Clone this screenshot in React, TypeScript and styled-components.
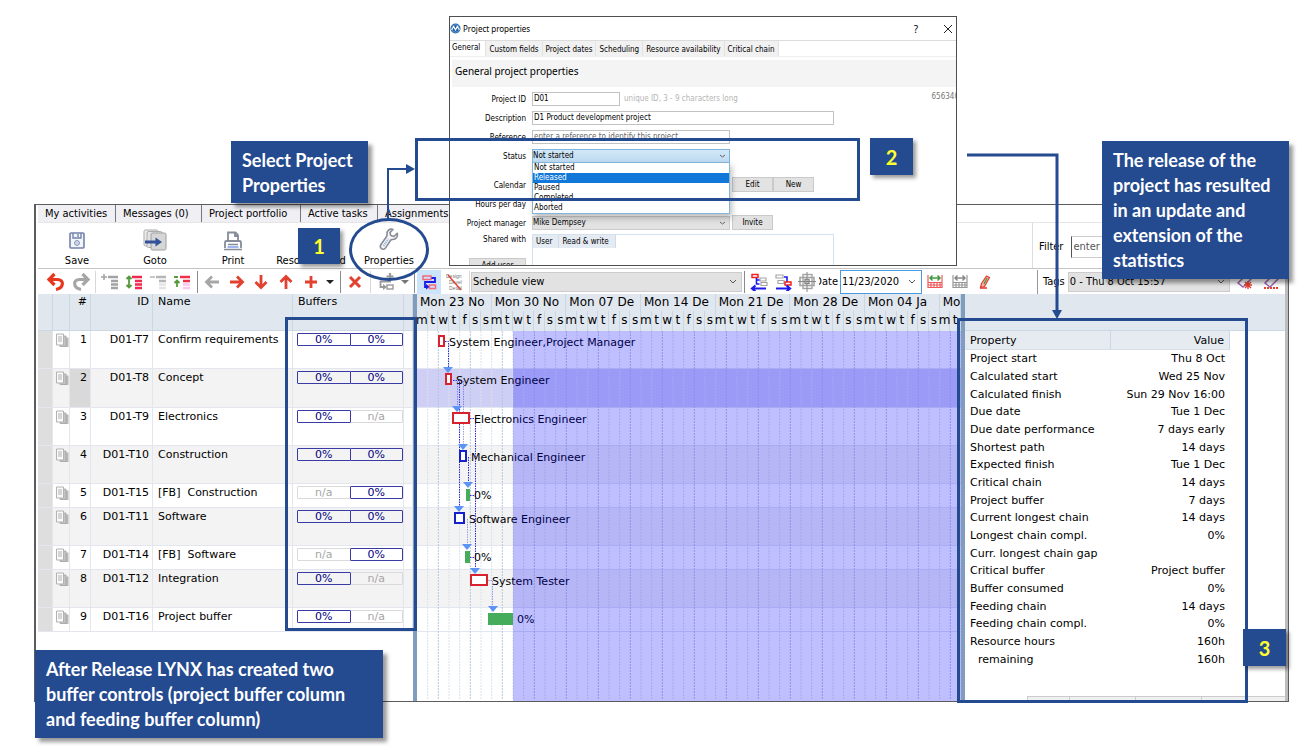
import React from "react";
import styled, { createGlobalStyle, css } from "styled-components";

const NAVY = "#244a90";
const HEAD = "#e0e7ef";
const WIDE = `"DejaVu Sans", Verdana, sans-serif`;
const UI = `"DejaVu Sans Condensed", "DejaVu Sans", Tahoma, sans-serif`;

const GlobalStyle = createGlobalStyle`
  * { box-sizing: border-box; }
  body { margin: 0; background: #fff; color: #000; font-family: ${UI}; font-size: 11px; }
  button, input, select { font: inherit; color: inherit; margin: 0; padding: 0; border-radius: 0; }
  table { border-collapse: separate; border-spacing: 0; }
  ul { list-style: none; margin: 0; padding: 0; }
`;

const Page = styled.main`
  position: relative;
  min-height: 100vh;
  padding: 204px 27px 16px 34px;
  overflow: hidden;
`;

/* ---------- application window ---------- */

const AppWindow = styled.section`
  display: flex;
  flex-direction: column;
  border: 1px solid #5c5c5c;
  border-left-width: 2px;
  box-shadow: inset -3px 0 0 #bdbdbd;
  padding: 0 3px 0 2px;
`;

const TabBar = styled.nav`
  display: flex;
  height: 18px;
  border-bottom: 1px solid #e6e6e6;
`;

const Tab = styled.button<{ $w: number }>`
  width: ${(p) => p.$w}px;
  border: 0;
  border-right: 1px solid #777;
  background: #efeff4;
  text-align: left;
  padding-left: 7px;
  white-space: nowrap;
`;

const MainTools = styled.div`
  display: flex;
  height: 46px;
  border-bottom: 1px solid #c4c4c4;
`;

const BigButton = styled.button`
  width: 78px;
  border: 0;
  background: none;
  display: flex;
  flex-direction: column;
  align-items: center;
  justify-content: flex-end;
  gap: 3px;
  padding-bottom: 1px;
  white-space: nowrap;
`;

const Spacer = styled.div`
  flex: 1;
`;

const FilterBox = styled.div`
  display: flex;
  align-items: center;
  gap: 8px;
  width: 253px;
  border-left: 1px solid #ddd;
  padding-left: 6px;
  padding-top: 2px;
`;

const FilterInput = styled.input`
  width: 160px;
  height: 22px;
  border: 1px solid #ccc;
  border-left-color: #555;
  padding-left: 1px;
  &::placeholder { color: #555; opacity: 1; }
`;

const Tools = styled.div`
  display: flex;
  align-items: center;
  height: 25px;
  padding-left: 6px;
`;

const ToolButton = styled.button<{ $w?: number; $on?: boolean }>`
  width: ${(p) => p.$w ?? 24}px;
  height: 24px;
  flex: none;
  border: 0;
  background: ${(p) => (p.$on ? "#cce4fb" : "none")};
  display: flex;
  align-items: center;
  justify-content: center;
`;

const Divider = styled.span<{ $w: number; $dark?: boolean }>`
  width: ${(p) => p.$w}px;
  height: 22px;
  flex: none;
  display: flex;
  justify-content: center;
  &::before {
    content: "";
    width: 1px;
    background: ${(p) => (p.$dark ? "#8a8a8a" : "#d8d8d8")};
  }
`;

const SelectWrap = styled.span<{ $w?: number }>`
  display: flex;
  align-items: center;
  width: ${(p) => (p.$w ? p.$w + "px" : "auto")};
  flex: none;
  select { flex: 1; min-width: 0; appearance: none; outline: 0; }
  svg { margin-left: -14px; margin-right: 4px; pointer-events: none; flex: none; }
`;

const SmallSelectWrap = styled(SelectWrap)`
  svg { margin-left: -12px; }
`;

const GreySelect = styled.select`
  height: 20px;
  border: 1px solid #ccc;
  background: #e2e2e2;
  padding-left: 1px;
`;

const DateLabel = styled.label`
  width: 21px;
  overflow: hidden;
  display: flex;
  justify-content: flex-end;
  padding-right: 2px;
`;

const DateWrap = styled(SelectWrap)`
  height: 24px;
  border: 1px solid #4a9be0;
  input { width: 100%; border: 0; outline: 0; padding-left: 1px; background: #fff; height: 22px; }
`;

const TagBox = styled.div`
  display: flex;
  align-items: center;
  width: 248px;
  border-left: 1px solid #999;
  padding-left: 5px;
  gap: 3px;
`;

/* ---------- workspace ---------- */

const Workspace = styled.div`
  display: flex;
  height: 407px;
  font-family: ${WIDE};
`;

const Splitter = styled.div`
  width: 4px;
  flex: none;
  background: #819dbd;
`;

const TaskPane = styled.div`
  width: 375px;
  flex: none;
`;

const TaskTable = styled.table`
  width: 100%;
  table-layout: fixed;
  th, td {
    padding: 1px 3px 0 5px;
    line-height: 15px;
    font-weight: 400;
    vertical-align: top;
    text-align: left;
    white-space: nowrap;
    border-right: 1px solid #e3e6ef;
    border-bottom: 1px solid #e3e6ef;
  }
  th { background: ${HEAD}; border-color: #cbd8e4; height: 37px; padding-top: 0; }
  th.right, td.right { text-align: right; }
  td.mark { background: #dedede; }
  td.doc { padding: 2px 0 0 2px; }
  td.buf { padding: 2px 0 0 4px; }
`;

const TaskRow = styled.tr<{ $h: number; $even: boolean; $sel: boolean }>`
  height: ${(p) => p.$h}px;
  background: ${(p) => (p.$even ? "#f3f3f3" : "#fff")};
  td.num { background: ${(p) => (p.$sel ? "#d9d9d9" : "transparent")}; }
`;

const BufferPair = styled.div`
  display: flex;
`;

const Buffer = styled.span<{ $on: boolean }>`
  width: 54px;
  height: 13px;
  line-height: 12px;
  text-align: center;
  border: 1px solid ${(p) => (p.$on ? "#3a3aa4" : "#dadada")};
  border-radius: 1px;
  color: ${(p) => (p.$on ? "#000080" : "#a6a6a6")};
  position: relative;
  z-index: ${(p) => (p.$on ? 1 : 0)};
  & + & { margin-left: -1px; }
`;

const GanttPane = styled.div`
  flex: 1;
  min-width: 0;
  display: flex;
  flex-direction: column;
`;

const Calendar = styled.div`
  display: grid;
  grid-template-columns: repeat(51, 1fr);
  grid-template-rows: 17px 20px;
  background: ${HEAD};
  font-size: 12px;
  overflow: hidden;
`;

const Week = styled.span<{ $span: number }>`
  grid-column: span ${(p) => p.$span};
  min-width: 0;
  overflow: hidden;
  white-space: nowrap;
  padding-left: 3px;
  line-height: 17px;
  border-right: 1px solid #c9d6e3;
`;

const Day = styled.span`
  min-width: 0;
  display: flex;
  justify-content: center;
  line-height: 18px;
  border-right: 1px solid #c9d6e3;
`;

const Chart = styled.svg`
  display: block;
  width: 100%;
  flex: 1;
  font-family: ${WIDE};
  font-size: 11px;
`;

const StatsPane = styled.aside`
  width: 320px;
  flex: none;
  display: flex;
  flex-direction: column;
`;

const StatsHead = styled.div`
  height: 37px;
  background: ${HEAD};
  border-bottom: 1px solid #cbd8e4;
`;

const StatsTable = styled.table`
  width: 265px;
  height: 337px;
  th, td { font-weight: 400; padding: 0 5px; text-align: left; line-height: 15px; }
  th { height: 19px; background: #e6ebf2; border-right: 1px solid #cbd8e4; border-bottom: 1px solid #d8e0ea; }
  th:last-child, td:last-child { text-align: right; width: 119px; }
  td.sub { padding-left: 13px; }
`;

const BottomStrip = styled.div`
  display: flex;
  height: 5px;
  margin: auto 0 0 62px;
  background: #f0f0f0;
  border-top: 1px solid #ccc;
  span { border-right: 1px solid #ccc; width: 66px; }
  span:first-child { width: 43px; border-left: 1px solid #ccc; }
`;

/* ---------- dialog ---------- */

const Dialog = styled.section`
  position: absolute;
  left: 449px;
  top: 16px;
  width: 508px;
  height: 250px;
  overflow: hidden;
  border: 1px solid #4f4f4f;
  background: #fff;
  font-size: 8px;
  line-height: 10px;
`;

const TitleBar = styled.header`
  display: flex;
  align-items: center;
  gap: 2px;
  height: 24px;
  border-bottom: 1px solid #dcdcdc;
  font-family: "Noto Sans", sans-serif;
`;

const TitleButton = styled.button`
  width: 33px;
  border: 0;
  background: none;
  display: flex;
  justify-content: flex-end;
  font-size: 10px;
  padding-right: 3px;
`;

const DialogTabs = styled.nav`
  display: flex;
  align-items: stretch;
  height: 16px;
  border-bottom: 1px solid #eee;
`;

const DialogTab = styled.button<{ $on?: boolean }>`
  border: 0;
  border-right: 1px solid #e2e2e2;
  background: ${(p) => (p.$on ? "#fff" : "#f1f1f1")};
  padding: ${(p) => (p.$on ? "0 5px 2px 2px" : "3px 3px 0")};
  white-space: nowrap;
`;

const Banner = styled.h2`
  margin: 3px 0 0 2px;
  height: 27px;
  padding: 1px 0 0 3px;
  background: #f4f4f4;
  font: 400 10px/20px "Noto Sans", sans-serif;
`;

const Form = styled.form`
  display: flex;
  flex-direction: column;
  padding-top: 2px;
`;

const Field = styled.div<{ $gap?: boolean }>`
  position: relative;
  display: flex;
  align-items: center;
  height: 19px;
  flex: none;
  margin-top: ${(p) => (p.$gap ? 10 : 0)}px;
`;

const FieldLabel = styled.label`
  width: 76px;
  margin-right: 6px;
  padding-top: 2px;
  text-align: right;
  flex: none;
`;

const TextInput = styled.input<{ $w: number }>`
  width: ${(p) => p.$w}px;
  height: 14px;
  border: 1px solid #c2c2c2;
  padding: 0 1px 1px;
  &::placeholder { color: #666; opacity: 1; }
`;

const Hint = styled.span`
  margin-left: 4px;
  padding-top: 1px;
  color: #b5b5b5;
`;

const ProjectCode = styled.span`
  margin-left: auto;
  margin-right: -3px;
  margin-bottom: 4px;
  color: #777;
`;

const FormSelect = styled.select<{ $blue?: boolean }>`
  height: 14px;
  border: 1px solid ${(p) => (p.$blue ? "#7fb4dd" : "#ccc")};
  background: ${(p) => (p.$blue ? "linear-gradient(#d3e8f8, #bedaf0)" : "#e2e2e2")};
`;

const OptionList = styled.ul`
  position: absolute;
  left: 82px;
  top: 16px;
  width: 198px;
  border: 1px solid #82b5dc;
  background: #fff;
  box-shadow: 2px 4px 6px rgba(0, 0, 0, 0.25);
  z-index: 1;
`;

const Option = styled.li<{ $on?: boolean }>`
  height: 10px;
  padding-left: 1px;
  ${(p) => p.$on && css`
    background: #1177d8;
    color: #fff;
  `}
`;

const SmallButton = styled.button<{ $w?: number }>`
  width: ${(p) => p.$w ?? 41}px;
  height: 15px;
  border: 1px solid #cacaca;
  background: #e2e2e2;
`;

const FieldSpace = styled.span<{ $w: number }>`
  width: ${(p) => p.$w}px;
  flex: none;
`;

const ShareRow = styled.div`
  display: flex;
  margin-top: 2px;
`;

const ShareSide = styled.div`
  width: 76px;
  margin-right: 6px;
  padding-top: 1px;
  display: flex;
  flex-direction: column;
  align-items: flex-end;
  gap: 13px;
`;

const ShareBox = styled.div`
  width: 302px;
  height: 48px;
  border: 1px solid #d4e0ee;
`;

const ShareTable = styled.table`
  th { font-weight: 400; background: #e4ebf3; height: 13px; padding: 0 6px 0 3px; border-right: 1px solid #cfdbe8; }
`;

/* ---------- annotations ---------- */

type Spot = { $x?: number; $r?: number; $y: number; $w: number; $h: number };

const spot = css<Spot>`
  position: absolute;
  ${(p) => (p.$r !== undefined ? `right: ${p.$r}px` : `left: ${p.$x}px`)};
  top: ${(p) => p.$y}px;
  width: ${(p) => p.$w}px;
  height: ${(p) => p.$h}px;
  z-index: 3;
`;

const Frame = styled.div<Spot>`
  ${spot}
  border: 3px solid ${NAVY};
  pointer-events: none;
`;

const Ring = styled(Frame)`
  border-radius: 50%;
`;

const Arrow = styled.svg<Spot>`
  ${spot}
  pointer-events: none;
`;

const Callout = styled.p<Spot>`
  ${spot}
  margin: 0;
  padding: 7px 0 0 11px;
  background: ${NAVY};
  color: #fff;
  font: 700 18px/25px Lato, sans-serif;
  white-space: nowrap;
  box-shadow: 4px 4px 4px rgba(0, 0, 0, 0.4);
`;

const Badge = styled.span<Spot>`
  ${spot}
  display: flex;
  align-items: center;
  justify-content: center;
  background: ${NAVY};
  color: #ffff2e;
  font: 700 20px/24px Lato, sans-serif;
  box-shadow: 3px 3px 4px rgba(0, 0, 0, 0.4);
`;

/* ---------- icons ---------- */

const Svg = ({ w = 20, h = 20, children }: { w?: number; h?: number; children: React.ReactNode }) => (
  <svg width={w} height={h} viewBox={`0 0 ${w} ${h}`} fill="none" aria-hidden="true">{children}</svg>
);

const Chevron = ({ small }: { small?: boolean }) =>
  small ? <Svg w={8} h={8}><path d="M2 3l2.5 2L7 3" stroke="#555" strokeWidth="0.9" /></Svg>
        : <Svg w={10} h={8}><path d="M2 2l3 3 3-3" stroke="#555" /></Svg>;

const Caret = ({ color = "#222" }: { color?: string }) => <Svg w={8} h={6}><path d="M0 1h8L4 5z" fill={color} /></Svg>;

const SaveIcon = () => (
  <Svg w={18} h={20}>
    <rect x="2" y="2" width="14" height="15" rx="1" stroke="#7283ab" strokeWidth="1.6" fill="#f3f5fa" />
    <path d="M5 2v5h8V2M10 3v3" stroke="#7283ab" strokeWidth="1.4" />
    <circle cx="9" cy="12" r="2.4" stroke="#7283ab" /><circle cx="9" cy="12" r="0.7" fill="#7283ab" />
  </Svg>
);

const GotoIcon = () => (
  <Svg w={24} h={22}>
    <rect x="1" y="1" width="14" height="16" rx="1.5" fill="#eee" stroke="#aaa" />
    <rect x="4" y="2.5" width="15" height="16" rx="1.5" fill="#e4e4e4" stroke="#aaa" />
    <rect x="8" y="4" width="15" height="17" rx="1.5" fill="#d6d6d6" stroke="#a0a0a0" />
    <path d="M2 11.500h10.500V8.500l6.500 4.500-6.500 4.500v-3H2z" fill="#34519b" />
  </Svg>
);

const PrintIcon = () => (
  <Svg w={20} h={20}>
    <path d="M5 10V1.500h7.500L15 4v6M12 2v3h3" stroke="#858b99" strokeWidth="1.800" />
    <path d="M2 17V11.500Q2 10 3.500 10h13Q18 10 18 11.500V17" stroke="#858b99" strokeWidth="1.800" />
    <path d="M5 13.500h10M1 18.500h18" stroke="#858b99" strokeWidth="1.600" />
    <path d="M4.500 16h11" stroke="#9db4ef" strokeWidth="2" />
  </Svg>
);

const WrenchIcon = () => (
  <Svg w={22} h={24}>
    <path d="M15 2.500c-3.500-1.300-6.500 1.300-6 5 .1.900.1 1.400-.4 2L3 17.500c-1 1.500-.8 3.200.4 4.200 1.300 1 3.100.7 4-.6l5.200-7.800c.4-.6.9-.8 1.700-.8 3.500.3 6-2.600 5-6.200l-3.400 3.200-3.100-.9-.9-3z" fill="#f5f6f8" stroke="#878d98" strokeWidth="1.600" strokeLinejoin="round" />
    <path d="M5.500 18.800l5-7" stroke="#8da4d8" strokeDasharray="1 1" strokeWidth="2" />
  </Svg>
);

const TurnArrow = ({ color, flip }: { color: string; flip?: boolean }) => (
  <Svg w={20} h={20}>
    <g transform={flip ? "translate(20 0) scale(-1 1)" : undefined} stroke={color}>
      <path d="M3 7.500h8.500c7 0 6.500 8.500-1.500 10" strokeWidth="3.200" />
      <path d="M8.500 2l-5.500 5.500 5.500 5.500" strokeWidth="3.200" />
    </g>
  </Svg>
);

const MoveArrow = ({ turn, color = "#e2412f" }: { turn: number; color?: string }) => (
  <Svg w={16} h={16}>
    <g transform={`rotate(${turn} 8 8)`} stroke={color} strokeWidth="2.800">
      <path d="M1 8h12M8 2.500L13.500 8 8 13.500" />
    </g>
  </Svg>
);

const IndentIcon = ({ main, mark, soft, kind }: { main: string; mark: string; soft: string; kind: "plus" | "both" | "minus" | "up" }) => (
  <Svg w={18} h={16}>
    <path d="M7 3h10M10 7h7" stroke={main} strokeWidth="2.400" />
    <path d="M10 10.500h7M10 14h7" stroke={soft} strokeWidth="2.400" />
    {kind === "plus" && <path d="M0 3h6M3 0v6" stroke={mark} strokeWidth="1.500" />}
    {kind === "minus" && <path d="M1 3h5" stroke={mark} strokeWidth="1.500" />}
    {kind === "both" && <path d="M4 3v10M1.500 5L4 2.500l2.500 2.500M1.500 11L4 13.500l2.500-2.500" stroke={mark} strokeWidth="1.800" />}
    {kind === "up" && <path d="M4 13V7M1.500 9L4 6.500l2.500 2.500M1 3h4" stroke={mark} strokeWidth="1.800" />}
  </Svg>
);

const PlusIcon = () => <Svg w={16} h={16}><path d="M2 8h12M8 2v12" stroke="#e2412f" strokeWidth="2.800" /></Svg>;
const CrossIcon = () => <Svg w={16} h={16}><path d="M3 3l10 10M13 3L3 13" stroke="#e2412f" strokeWidth="3" /></Svg>;

const LinkIcon = () => (
  <Svg w={18} h={18}>
    <path d="M13 0v7M9.500 3.500h7" stroke="#999" strokeWidth="2.200" />
    <path d="M14 8.500H3.500V14h3" stroke="#999" strokeWidth="1.800" />
    <path d="M6 11l4 3-4 3z" fill="#999" /><rect x="10" y="12" width="6" height="4" stroke="#999" strokeWidth="1.400" />
  </Svg>
);

const ScheduleIcon = () => (
  <Svg w={16} h={16}>
    <rect x="2" y="2" width="8" height="3.500" stroke="#f26a78" strokeWidth="1.500" />
    <path d="M10.500 4H14v4H4v5h2" stroke="#1b1bea" strokeWidth="1.800" />
    <path d="M5 10l4 2.800-4 2.700z" fill="#1b1bea" /><rect x="8.500" y="11" width="6" height="3.500" stroke="#f26a78" strokeWidth="1.500" />
  </Svg>
);

const DesignIcon = () => (
  <Svg w={18} h={18}>
    <g fill="#777" fontSize="5" fontFamily="Liberation Sans, sans-serif">
      <text x="1" y="5">Design</text><text x="4" y="11">Devel</text><text x="4" y="17">Detail</text>
    </g>
    <path d="M3 2l13 15" stroke="#e2412f" strokeWidth="1.400" />
  </Svg>
);

const ShiftIcon = ({ right }: { right?: boolean }) => (
  <Svg w={18} h={18}>
    {right ? (
      <>
        <path d="M2 2h7v3H2zM4 7.500h6v3H4z" stroke="#a5a5a5" strokeWidth="1.200" />
        <path d="M10 4h3v5" stroke="#1b1bea" strokeWidth="1.600" />
        <rect x="11" y="9" width="6" height="3" stroke="#e22" strokeWidth="1.500" />
        <path d="M2 15.500h13M12.500 12.500l3.500 3-3.500 3" stroke="#1b1bea" strokeWidth="2.200" />
      </>
    ) : (
      <>
        <rect x="2" y="1.500" width="6" height="3" stroke="#e22" strokeWidth="1.500" />
        <path d="M10 5h6v3h-6zM11 9.500h6v3h-6z" stroke="#a5a5a5" strokeWidth="1.200" />
        <path d="M6.500 5v6h3M6.500 7h3" stroke="#1b1bea" strokeWidth="1.600" />
        <path d="M3 15.500h13M5.500 12.500l-3.500 3 3.500 3" stroke="#1b1bea" strokeWidth="2.200" />
      </>
    )}
  </Svg>
);

const TargetIcon = () => (
  <Svg w={18} h={20}>
    <rect x="2" y="5.500" width="14" height="8" stroke="#a5a5a5" strokeWidth="1.600" />
    <rect x="5" y="2.500" width="9" height="14" stroke="#a5a5a5" strokeWidth="1.400" />
    <path d="M9 0v20M0 9.500h18" stroke="#888" /><rect x="7" y="7.500" width="4" height="4" stroke="#888" strokeWidth="1.400" />
  </Svg>
);

const SpanIcon = ({ red }: { red?: boolean }) => {
  const c = red ? "#ee5a5a" : "#999";
  return (
    <Svg w={16} h={16}>
      <path d="M1 1v13M15 1v13M1 8.500h14M1 11h14M1 13.500h14M4 8v6M7 8v6M10 8v6M13 8v6" stroke={c} strokeWidth="1.200" />
      <path d="M3 4h10M5.500 1.500L3 4l2.500 2.500M10.500 1.500L13 4l-2.500 2.500" stroke={red ? "#3f9a3f" : "#888"} strokeWidth="1.500" />
    </Svg>
  );
};

const PenIcon = () => (
  <Svg w={14} h={16}>
    <path d="M8.500 2l3 1.500-5 9-4 1 1-4z" fill="#f3b2ab" stroke="#e2412f" strokeWidth="1.200" />
    <path d="M9 4L6 10" stroke="#3f9a3f" strokeWidth="1.300" /><path d="M2 14h7" stroke="#e2412f" strokeWidth="1.600" />
  </Svg>
);

const TagIcon = ({ dotted }: { dotted?: boolean }) => (
  <Svg w={18} h={18}>
    <path d="M2 10l8-8h5v4l-8 8z" stroke="#9a62b8" strokeWidth="1.500" />
    {dotted ? <path d="M1 15h15" stroke="#e2412f" strokeWidth="2" strokeDasharray="2 1" />
            : <path d="M8 12h8M12 8v8M9 9l6 6M15 9l-6 6" stroke="#e2412f" strokeWidth="1.400" />}
  </Svg>
);

const DocIcon = () => (
  <Svg w={15} h={15}>
    <path d="M8 4.500h5.500v9.500H8z" fill="#b9b9b9" /><path d="M5 3h6v10.500H5z" fill="#c4c4c4" stroke="#a5a5a5" strokeWidth="0.800" />
    <path d="M1.500 1h7v11h-7z" fill="#fafafa" stroke="#b2b2b2" />
    <path d="M3 4h4M3 6h4M3 8h4" stroke="#b0b0b0" />
  </Svg>
);

const LogoIcon = () => (
  <Svg w={11} h={11}>
    <circle cx="5.500" cy="5.500" r="5" fill="#2062a8" />
    <path d="M1.500 7l2.200-3.500L5.500 7l1.800-3.500L9.500 7" stroke="#fff" strokeWidth="1.200" />
    <circle cx="5.500" cy="5.500" r="3.800" stroke="#8fc0ea" strokeWidth="0.600" />
  </Svg>
);

/* ---------- data ---------- */

type Task = { id: string; name: string; b: [string, string]; h: number };

const tasks: Task[] = [
  { id: "D01-T7", name: "Confirm requirements", b: ["0%", "0%"], h: 38 },
  { id: "D01-T8", name: "Concept", b: ["0%", "0%"], h: 39 },
  { id: "D01-T9", name: "Electronics", b: ["0%", "n/a"], h: 38 },
  { id: "D01-T10", name: "Construction", b: ["0%", "0%"], h: 38 },
  { id: "D01-T15", name: "[FB]\u00a0 Construction", b: ["n/a", "0%"], h: 24 },
  { id: "D01-T11", name: "Software", b: ["0%", "0%"], h: 38 },
  { id: "D01-T14", name: "[FB]\u00a0 Software", b: ["n/a", "0%"], h: 24 },
  { id: "D01-T12", name: "Integration", b: ["0%", "n/a"], h: 38 },
  { id: "D01-T16", name: "Project buffer", b: ["0%", "n/a"], h: 24 },
];

const RED = "#d8232f";
const BLUE = "#1420c8";
const GREEN = "#45ac5c";

const bars = [
  { x: 21, w: 7, c: RED, t: "System Engineer,Project Manager" },
  { x: 28, w: 7, c: RED, t: "System Engineer", tip: 31 },
  { x: 35, w: 18, c: RED, t: "Electronics Engineer", tip: 40 },
  { x: 42, w: 8, c: BLUE, t: "Mechanical Engineer", tip: 46 },
  { x: 49, w: 4, c: GREEN, t: "0%", tip: 51 },
  { x: 37, w: 11, c: BLUE, t: "Software Engineer", tip: 42 },
  { x: 48, w: 5, c: GREEN, t: "0%", tip: 50 },
  { x: 53, w: 18, c: RED, t: "System Tester", tip: 58 },
  { x: 71, w: 25, c: GREEN, t: "0%", tip: 76 },
];

const rowTops = tasks.map((_, i) => tasks.slice(0, i).reduce((s, t) => s + t.h, 0));

const weeks = ["Mon 23 No", "Mon 30 No", "Mon 07 De", "Mon 14 De", "Mon 21 De", "Mon 28 De", "Mon 04 Ja", "Mon"];
const days = Array.from({ length: 51 }, (_, i) => "mtwtfss"[i % 7]);

const stats: [string, string][] = [
  ["Project start", "Thu 8 Oct"], ["Calculated start", "Wed 25 Nov"], ["Calculated finish", "Sun 29 Nov 16:00"],
  ["Due date", "Tue 1 Dec"], ["Due date performance", "7 days early"], ["Shortest path", "14 days"],
  ["Expected finish", "Tue 1 Dec"], ["Critical chain", "14 days"], ["Project buffer", "7 days"],
  ["Current longest chain", "14 days"], ["Longest chain compl.", "0%"], ["Curr. longest chain gap", ""],
  ["Critical buffer", "Project buffer"], ["Buffer consumed", "0%"], ["Feeding chain", "14 days"],
  ["Feeding chain compl.", "0%"], ["Resource hours", "160h"], ["remaining", "160h"],
];

const statuses = ["Not started", "Released", "Paused", "Completed", "Aborted"];

const GanttChart = () => (
  <Chart role="img" aria-label="Schedule">
    {tasks.map((t, i) => (
      <g key={t.id}>
        <rect x="0" y={rowTops[i]} width="100%" height={t.h} fill={i === 1 ? "#cfcff5" : i % 2 ? "#f3f3f3" : "#fff"} />
        <path d={`M0 ${rowTops[i] + t.h - 0.5}h2000`} stroke="#e2e6f0" />
      </g>
    ))}
    {days.map((_, i) => (
      <line key={i} x1={`${((i + 1) / 51) * 100}%`} x2={`${((i + 1) / 51) * 100}%`} y1="0" y2="369"
        stroke={i % 3 === 1 ? "#b3c8dc" : "#d8e2ea"} strokeDasharray="2 1" />
    ))}
    <g fill="none" stroke="#2a2ae0" strokeDasharray="1.5 1">
      <path d="M28 10.500h3.500v26M36 49.500h6.500v126M53 87.500h5.500v149M51.500 126v27M53 164.500h5M53 226.500h5" />
      <path d="M40.500 50v26M46.500 50v64M50.500 188v26M71 249.500h4.500v27" opacity="0.45" />
    </g>
    {bars.map((b, i) => {
      const y = rowTops[i];
      return (
        <g key={i}>
          {b.c === GREEN
            ? <rect x={b.x} y={y + 5} width={b.w} height="12" fill={GREEN} />
            : <rect x={b.x + 1} y={y + 5} width={b.w - 2} height="10" fill="#fff" stroke={b.c} strokeWidth="2" />}
          {b.tip !== undefined && <path d={`M${b.tip - 5} ${y - 2}h10l-5 6z`} fill="#5c94f5" />}
          <text x={b.x + b.w + 4} y={y + 15}>{b.t}</text>
        </g>
      );
    })}
    <rect x="96" y="0" width="100%" height="100%" fill="#0000ff" opacity="0.25" />
  </Chart>
);

const ProjectDialog = () => (
  <Dialog role="dialog" aria-label="Project properties">
    <TitleBar>
      <LogoIcon />
      Project properties
      <Spacer />
      <TitleButton type="button">?</TitleButton>
      <TitleButton type="button" aria-label="Close">
        <Svg w={10} h={10}><path d="M1 1l8 8M9 1L1 9" stroke="#222" /></Svg>
      </TitleButton>
    </TitleBar>
    <DialogTabs>
      <DialogTab $on type="button">General</DialogTab>
      {["Custom fields", "Project dates", "Scheduling", "Resource availability", "Critical chain"].map((t) => (
        <DialogTab key={t} type="button">{t}</DialogTab>
      ))}
    </DialogTabs>
    <Banner>General project properties</Banner>
    <Form>
      <Field>
        <FieldLabel htmlFor="pid">Project ID</FieldLabel>
        <TextInput id="pid" $w={88} defaultValue="D01" />
        <Hint>unique ID, 3 - 9 characters long</Hint>
        <ProjectCode>656340</ProjectCode>
      </Field>
      <Field>
        <FieldLabel htmlFor="desc">Description</FieldLabel>
        <TextInput id="desc" $w={302} defaultValue="D1 Product development project" />
      </Field>
      <Field>
        <FieldLabel htmlFor="ref">Reference</FieldLabel>
        <TextInput id="ref" $w={198} placeholder="enter a reference to identify this project" />
      </Field>
      <Field>
        <FieldLabel htmlFor="status">Status</FieldLabel>
        <SmallSelectWrap $w={198}>
          <FormSelect id="status" $blue defaultValue="Not started">
            {statuses.map((o) => <option key={o}>{o}</option>)}
          </FormSelect>
          <Chevron small />
        </SmallSelectWrap>
        <OptionList role="listbox" aria-label="Status">
          {statuses.map((o) => (
            <Option key={o} role="option" aria-selected={o === "Released"} $on={o === "Released"}>{o}</Option>
          ))}
        </OptionList>
      </Field>
      <Field $gap>
        <FieldLabel as="span">Calendar</FieldLabel>
        <FieldSpace $w={200} />
        <SmallButton type="button">Edit</SmallButton>
        <SmallButton type="button">New</SmallButton>
      </Field>
      <Field>
        <FieldLabel as="span">Hours per day</FieldLabel>
      </Field>
      <Field>
        <FieldLabel htmlFor="manager">Project manager</FieldLabel>
        <SmallSelectWrap $w={198}>
          <FormSelect id="manager"><option>Mike Dempsey</option></FormSelect>
          <Chevron small />
        </SmallSelectWrap>
        <FieldSpace $w={2} />
        <SmallButton type="button">Invite</SmallButton>
      </Field>
      <ShareRow>
        <ShareSide>
          <span>Shared with</span>
          <SmallButton type="button" $w={57}>Add user</SmallButton>
        </ShareSide>
        <ShareBox>
          <ShareTable>
            <thead><tr><th>User</th><th>Read &amp; write</th></tr></thead>
          </ShareTable>
        </ShareBox>
      </ShareRow>
    </Form>
  </Dialog>
);

export default function App() {
  return (
    <>
      <GlobalStyle />
      <Page>
        <AppWindow>
          <TabBar>
            <Tab $w={78} type="button">My activities</Tab>
            <Tab $w={86} type="button">Messages (0)</Tab>
            <Tab $w={99} type="button">Project portfolio</Tab>
            <Tab $w={77} type="button">Active tasks</Tab>
            <Tab $w={100} type="button">Assignments</Tab>
          </TabBar>
          <MainTools>
            <BigButton type="button"><SaveIcon />Save</BigButton>
            <BigButton type="button"><GotoIcon />Goto</BigButton>
            <BigButton type="button"><PrintIcon />Print</BigButton>
            <BigButton type="button">Resource load</BigButton>
            <BigButton type="button"><WrenchIcon />Properties</BigButton>
            <Spacer />
            <FilterBox>
              <label htmlFor="filter">Filter</label>
              <FilterInput id="filter" placeholder="enter" />
            </FilterBox>
          </MainTools>
          <Tools>
            <ToolButton $w={24} aria-label="Undo"><TurnArrow color="#e8371f" /></ToolButton>
            <ToolButton $w={25} aria-label="Redo"><TurnArrow color="#a6a6a6" flip /></ToolButton>
            <Divider $w={5} />
            <ToolButton aria-label="Add child"><IndentIcon kind="plus" main="#a3a3a3" soft="#a3a3a3" mark="#a3a3a3" /></ToolButton>
            <ToolButton aria-label="Expand"><IndentIcon kind="both" main="#ee2a4e" soft="#ee2a4e" mark="#559a3c" /></ToolButton>
            <ToolButton aria-label="Remove child"><IndentIcon kind="minus" main="#b5b5b5" soft="#e4e4e4" mark="#b5b5b5" /></ToolButton>
            <ToolButton aria-label="Promote"><IndentIcon kind="up" main="#ee3048" soft="#f9c8ee" mark="#559a3c" /></ToolButton>
            <Divider $w={6} $dark />
            <ToolButton aria-label="Left"><MoveArrow turn={180} color="#a6a6a6" /></ToolButton>
            <ToolButton $w={25} aria-label="Right"><MoveArrow turn={0} /></ToolButton>
            <ToolButton aria-label="Down"><MoveArrow turn={90} /></ToolButton>
            <ToolButton $w={25} aria-label="Up"><MoveArrow turn={270} /></ToolButton>
            <ToolButton $w={25} aria-label="Add"><PlusIcon /></ToolButton>
            <ToolButton $w={14} aria-label="Add menu"><Caret /></ToolButton>
            <Divider $w={6} $dark />
            <ToolButton aria-label="Delete"><CrossIcon /></ToolButton>
            <Divider $w={6} />
            <ToolButton $w={26} aria-label="Link"><LinkIcon /></ToolButton>
            <ToolButton $w={12} aria-label="Link menu"><Caret color="#777" /></ToolButton>
            <Divider $w={6} $dark />
            <ToolButton $on aria-label="Schedule"><ScheduleIcon /></ToolButton>
            <ToolButton $w={26} aria-label="Design"><DesignIcon /></ToolButton>
            <Divider $w={4} />
            <SelectWrap $w={271}>
              <GreySelect aria-label="View"><option>Schedule view</option></GreySelect>
              <Chevron />
            </SelectWrap>
            <Divider $w={5} $dark />
            <ToolButton aria-label="Shift left"><ShiftIcon /></ToolButton>
            <ToolButton aria-label="Shift right"><ShiftIcon right /></ToolButton>
            <ToolButton aria-label="Centre"><TargetIcon /></ToolButton>
            <DateLabel htmlFor="date">Date</DateLabel>
            <DateWrap $w={82}>
              <input id="date" defaultValue="11/23/2020" />
              <Chevron />
            </DateWrap>
            <ToolButton $w={25} aria-label="Fit"><SpanIcon red /></ToolButton>
            <ToolButton $w={25} aria-label="Fit all"><SpanIcon /></ToolButton>
            <ToolButton $w={25} aria-label="Edit"><PenIcon /></ToolButton>
            <Spacer />
            <TagBox>
              <label htmlFor="tags">Tags</label>
              <SelectWrap $w={162}>
                <GreySelect id="tags"><option>0 - Thu 8 Oct 15:57</option></GreySelect>
                <Chevron />
              </SelectWrap>
              <ToolButton aria-label="Add tag"><TagIcon /></ToolButton>
              <ToolButton aria-label="Tag list"><TagIcon dotted /></ToolButton>
            </TagBox>
          </Tools>

          <Workspace>
            <TaskPane>
              <TaskTable>
                <colgroup>
                  {[15, 17, 21, 62, 140, 111, 9].map((w, i) => <col key={i} width={w} />)}
                </colgroup>
                <thead>
                  <tr><th /><th /><th className="right">#</th><th className="right">ID</th><th>Name</th><th>Buffers</th><th /></tr>
                </thead>
                <tbody>
                  {tasks.map((t, i) => (
                    <TaskRow key={t.id} $h={t.h} $even={i % 2 === 1} $sel={i === 1}>
                      <td className="mark" />
                      <td className="doc"><DocIcon /></td>
                      <td className="num right">{i + 1}</td>
                      <td className="right">{t.id}</td>
                      <td>{t.name}</td>
                      <td className="buf">
                        <BufferPair>
                          {t.b.map((v, k) => <Buffer key={k} $on={v !== "n/a"}>{v}</Buffer>)}
                        </BufferPair>
                      </td>
                      <td />
                    </TaskRow>
                  ))}
                </tbody>
              </TaskTable>
            </TaskPane>
            <Splitter />
            <GanttPane>
              <Calendar>
                {weeks.map((w, i) => <Week key={w} $span={i < 7 ? 7 : 2}>{w}</Week>)}
                {days.map((d, i) => <Day key={i}>{d}</Day>)}
              </Calendar>
              <GanttChart />
            </GanttPane>
            <Splitter />
            <StatsPane>
              <StatsHead />
              <StatsTable>
                <thead><tr><th>Property</th><th>Value</th></tr></thead>
                <tbody>
                  {stats.map(([k, v]) => (
                    <tr key={k}><td className={k === "remaining" ? "sub" : undefined}>{k}</td><td>{v}</td></tr>
                  ))}
                </tbody>
              </StatsTable>
              <BottomStrip><span /><span /><span /></BottomStrip>
            </StatsPane>
          </Workspace>
        </AppWindow>

        <ProjectDialog />

        <Frame $x={415} $y={138} $w={445} $h={63} />
        <Frame $x={285} $y={317} $w={132} $h={314} />
        <Frame $r={68} $y={318} $w={291} $h={385} />
        <Ring $x={349} $y={218} $w={80} $h={63} />
        <Arrow $x={380} $y={160} $w={36} $h={60} viewBox="0 0 36 60">
          <path d="M8 60V9h20" fill="none" stroke={NAVY} strokeWidth="2" />
          <path d="M26 4l9 5-9 5z" fill={NAVY} />
        </Arrow>
        <Arrow $r={254} $y={150} $w={95} $h={170} viewBox="0 0 95 170">
          <path d="M0 5h90v158" fill="none" stroke={NAVY} strokeWidth="3" />
          <path d="M85 160h10l-5 9z" fill={NAVY} />
        </Arrow>
        <Callout $x={231} $y={141} $w={137} $h={62}>Select Project<br />Properties</Callout>
        <Callout $r={27} $y={141} $w={187} $h={138}>
          The release of the<br />project has resulted<br />in an update and<br />extension of the<br />statistics
        </Callout>
        <Callout $x={35} $y={650} $w={348} $h={88}>
          After Release LYNX has created two<br />buffer controls (project buffer column<br />and feeding buffer column)
        </Callout>
        <Badge $x={298} $y={228} $w={42} $h={36}>1</Badge>
        <Badge $x={870} $y={138} $w={43} $h={37}>2</Badge>
        <Badge $r={30} $y={629} $w={43} $h={37}>3</Badge>
      </Page>
    </>
  );
}
